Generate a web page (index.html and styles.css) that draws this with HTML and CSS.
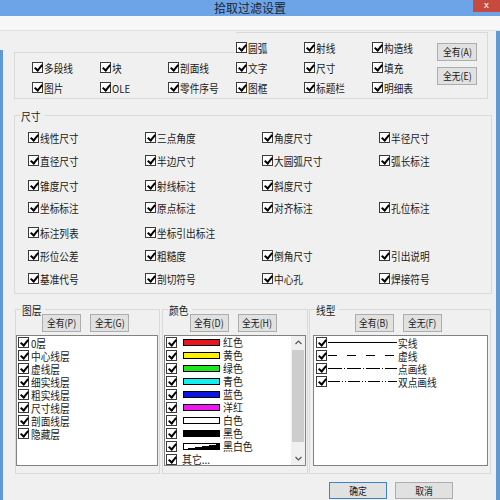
FILE: index.html
```html
<!DOCTYPE html>
<html lang="zh-CN">
<head>
<meta charset="utf-8">
<title>拾取过滤设置</title>
<link rel="stylesheet" href="styles.css">
</head>
<body>
<div class="titlebar">
  <div class="title-text">拾取过滤设置</div>
  <div class="close">x</div>
</div>
<div class="band"></div>
<div class="frame">
  <div class="edge-l"></div>
  <div class="content">
    <div class="topgroup">
      <div class="notch"></div>
      <div class="btns">
        <button class="btn"><span class="bt">全有(A)</span></button>
        <button class="btn"><span class="bt">全无(E)</span></button>
      </div>
      <div class="ci"><span class="cb"></span><span class="t">圆弧</span></div>
      <div class="ci"><span class="cb"></span><span class="t">射线</span></div>
      <div class="ci"><span class="cb"></span><span class="t">构造线</span></div>
      <div class="ci"><span class="cb"></span><span class="t">多段线</span></div>
      <div class="ci"><span class="cb"></span><span class="t">块</span></div>
      <div class="ci"><span class="cb"></span><span class="t">剖面线</span></div>
      <div class="ci"><span class="cb"></span><span class="t">文字</span></div>
      <div class="ci"><span class="cb"></span><span class="t">尺寸</span></div>
      <div class="ci"><span class="cb"></span><span class="t">填充</span></div>
      <div class="ci"><span class="cb"></span><span class="t">图片</span></div>
      <div class="ci"><span class="cb"></span><span class="t">OLE</span></div>
      <div class="ci"><span class="cb"></span><span class="t">零件序号</span></div>
      <div class="ci"><span class="cb"></span><span class="t">图框</span></div>
      <div class="ci"><span class="cb"></span><span class="t">标题栏</span></div>
      <div class="ci"><span class="cb"></span><span class="t">明细表</span></div>
    </div>

    <div class="dimgroup">
      <span class="glabel"><span class="t">尺寸</span></span>
      <div class="dimgrid">
        <div class="ci"><span class="cb"></span><span class="t">线性尺寸</span></div>
        <div class="ci"><span class="cb"></span><span class="t">三点角度</span></div>
        <div class="ci"><span class="cb"></span><span class="t">角度尺寸</span></div>
        <div class="ci"><span class="cb"></span><span class="t">半径尺寸</span></div>

        <div class="ci"><span class="cb"></span><span class="t">直径尺寸</span></div>
        <div class="ci"><span class="cb"></span><span class="t">半边尺寸</span></div>
        <div class="ci"><span class="cb"></span><span class="t">大圆弧尺寸</span></div>
        <div class="ci"><span class="cb"></span><span class="t">弧长标注</span></div>

        <div class="ci"><span class="cb"></span><span class="t">锥度尺寸</span></div>
        <div class="ci"><span class="cb"></span><span class="t">射线标注</span></div>
        <div class="ci"><span class="cb"></span><span class="t">斜度尺寸</span></div>
        <div class="empty"></div>

        <div class="ci"><span class="cb"></span><span class="t">坐标标注</span></div>
        <div class="ci"><span class="cb"></span><span class="t">原点标注</span></div>
        <div class="ci"><span class="cb"></span><span class="t">对齐标注</span></div>
        <div class="ci"><span class="cb"></span><span class="t">孔位标注</span></div>

        <div class="ci"><span class="cb"></span><span class="t">标注列表</span></div>
        <div class="ci"><span class="cb"></span><span class="t">坐标引出标注</span></div>
        <div class="empty"></div>
        <div class="empty"></div>

        <div class="ci"><span class="cb"></span><span class="t">形位公差</span></div>
        <div class="ci"><span class="cb"></span><span class="t">粗糙度</span></div>
        <div class="ci"><span class="cb"></span><span class="t">倒角尺寸</span></div>
        <div class="ci"><span class="cb"></span><span class="t">引出说明</span></div>

        <div class="ci"><span class="cb"></span><span class="t">基准代号</span></div>
        <div class="ci"><span class="cb"></span><span class="t">剖切符号</span></div>
        <div class="ci"><span class="cb"></span><span class="t">中心孔</span></div>
        <div class="ci"><span class="cb"></span><span class="t">焊接符号</span></div>
      </div>
    </div>

    <div class="bottomrow">
      <div class="bgroup layers">
        <span class="glabel"><span class="t">图层</span></span>
        <div class="brow">
          <button class="btn sm"><span class="bt">全有(P)</span></button>
          <button class="btn sm"><span class="bt">全无(G)</span></button>
        </div>
        <div class="lst">
          <div class="li"><span class="cb"></span><span class="t">0层</span></div>
          <div class="li"><span class="cb"></span><span class="t">中心线层</span></div>
          <div class="li"><span class="cb"></span><span class="t">虚线层</span></div>
          <div class="li"><span class="cb"></span><span class="t">细实线层</span></div>
          <div class="li"><span class="cb"></span><span class="t">粗实线层</span></div>
          <div class="li"><span class="cb"></span><span class="t">尺寸线层</span></div>
          <div class="li"><span class="cb"></span><span class="t">剖面线层</span></div>
          <div class="li"><span class="cb"></span><span class="t">隐藏层</span></div>
        </div>
      </div>

      <div class="bgroup colors">
        <span class="glabel"><span class="t">颜色</span></span>
        <div class="brow">
          <button class="btn sm"><span class="bt">全有(D)</span></button>
          <button class="btn sm"><span class="bt">全无(H)</span></button>
        </div>
        <div class="lst clist">
          <div class="citems">
            <div class="li"><span class="cb"></span><span class="sw red"></span><span class="ct">红色</span></div>
            <div class="li"><span class="cb"></span><span class="sw yellow"></span><span class="ct">黄色</span></div>
            <div class="li"><span class="cb"></span><span class="sw green"></span><span class="ct">绿色</span></div>
            <div class="li"><span class="cb"></span><span class="sw cyan"></span><span class="ct">青色</span></div>
            <div class="li"><span class="cb"></span><span class="sw blue"></span><span class="ct">蓝色</span></div>
            <div class="li"><span class="cb"></span><span class="sw magenta"></span><span class="ct">洋红</span></div>
            <div class="li"><span class="cb"></span><span class="sw white"></span><span class="ct">白色</span></div>
            <div class="li"><span class="cb"></span><span class="sw black"></span><span class="ct">黑色</span></div>
            <div class="li"><span class="cb"></span><span class="sw bw"></span><span class="ct">黑白色</span></div>
            <div class="li"><span class="cb"></span><span class="ct other">其它...</span></div>
          </div>
          <div class="sb">
            <div class="arrow">
              <svg width="7" height="5" viewBox="0 0 7 5"><path d="M0.5 4 L3.5 1 L6.5 4" fill="none" stroke="#555" stroke-width="1.2"/></svg>
            </div>
            <div class="track"><div class="thumb"></div></div>
            <div class="arrow">
              <svg width="7" height="5" viewBox="0 0 7 5"><path d="M0.5 1 L3.5 4 L6.5 1" fill="none" stroke="#555" stroke-width="1.2"/></svg>
            </div>
          </div>
        </div>
      </div>

      <div class="bgroup linetypes">
        <span class="glabel"><span class="t">线型</span></span>
        <div class="brow">
          <button class="btn sm"><span class="bt">全有(B)</span></button>
          <button class="btn sm"><span class="bt">全无(F)</span></button>
        </div>
        <div class="lst">
          <div class="li"><span class="cb"></span>
            <svg class="ln" width="69" height="11" viewBox="0 0 69 11"><line x1="0" y1="5.5" x2="69" y2="5.5" stroke="#000" stroke-width="1"/></svg>
            <span class="t">实线</span></div>
          <div class="li"><span class="cb"></span>
            <svg class="ln" width="69" height="11" viewBox="0 0 69 11"><line x1="0" y1="5.5" x2="69" y2="5.5" stroke="#000" stroke-width="1" stroke-dasharray="9 10"/></svg>
            <span class="t">虚线</span></div>
          <div class="li"><span class="cb"></span>
            <svg class="ln" width="69" height="11" viewBox="0 0 69 11"><line x1="0" y1="5.5" x2="69" y2="5.5" stroke="#000" stroke-width="1" stroke-dasharray="14 2 1 2"/></svg>
            <span class="t">点画线</span></div>
          <div class="li"><span class="cb"></span>
            <svg class="ln" width="69" height="11" viewBox="0 0 69 11"><line x1="0" y1="5.5" x2="69" y2="5.5" stroke="#000" stroke-width="1" stroke-dasharray="12 2 1 2 1 2"/></svg>
            <span class="t">双点画线</span></div>
        </div>
      </div>
    </div>

    <div class="actions">
      <button class="btn act default"><span class="bt">确定</span></button>
      <button class="btn act"><span class="bt">取消</span></button>
    </div>
  </div>
  <div class="edge-r"></div>
</div>
</body>
</html>
```

FILE: styles.css
```css
* { box-sizing: border-box; }
html, body { margin: 0; padding: 0; }
body {
  width: 500px;
  height: 500px;
  overflow: hidden;
  background: #f0f0f0;
  font-family: "Noto Sans CJK SC", "Liberation Sans", sans-serif;
  font-size: 11px;
  color: #1a1a1a;
}

/* title bar */
.titlebar {
  display: grid;
  grid-template-columns: 1fr auto 1fr;
  height: 16px;
  background: #6ca4e7;
}
.title-text {
  grid-column: 2;
  font-size: 12px;
  line-height: 16px;
  color: #1d2633;
}
.close {
  grid-column: 3;
  justify-self: end;
  width: 27px;
  height: 12px;
  background: #c84a3e;
  color: #fff;
  font-family: "DejaVu Sans", sans-serif;
  font-size: 9px;
  line-height: 11px;
  text-align: center;
}
.band {
  height: 15px;
  background: #f7f7f7;
  border-bottom: 1px solid #e1e1e1;
}

/* frame */
.frame { display: flex; height: 469px; }
.edge-l { width: 3px; margin-top: 19px; background: #5f9ad6; }
.edge-r { width: 4px; background: #5f9ad6; }
.content { flex: 1; display: flex; flex-direction: column; }

/* text helpers */
.t {
  display: inline-block;
  line-height: 12px;
  transform: scaleX(.88);
  transform-origin: 0 50%;
  white-space: nowrap;
}

/* checkbox */
.cb {
  flex: none;
  width: 11px;
  height: 11px;
  border: 1px solid #3a3a3a;
  background: #fff;
}
.cb::after {
  content: "";
  display: block;
  width: 3px;
  height: 6px;
  margin: 0 0 0 3px;
  border: solid #000;
  border-width: 0 2px 2px 0;
  transform: rotate(40deg);
}
.ci {
  display: flex;
  align-items: center;
  height: 11px;
  gap: 1px;
  white-space: nowrap;
}

/* buttons */
.btn {
  display: flex;
  align-items: center;
  justify-content: center;
  width: 40px;
  height: 18px;
  padding: 0;
  margin: 0;
  border: 1px solid #adadad;
  background: #e1e1e1;
  font-family: inherit;
  font-size: 10px;
  color: #1a1a1a;
}
.bt {
  display: inline-block;
  transform: scaleX(.88);
  white-space: nowrap;
  line-height: 12px;
}
.btn.sm { width: 39px; }

/* top group */
.topgroup {
  margin: 1px 0 0 11px;
  width: 474px;
  height: 67px;
  border: 1px solid #d9d9d9;
  display: grid;
  grid-template-columns: repeat(5, 68px) 65px 40px;
  grid-template-rows: repeat(3, 20px);
  padding: 9px 0 0 17px;
}
.notch {
  grid-column: 1 / span 3;
  grid-row: 1;
  align-self: start;
  justify-self: start;
  width: 222px;
  height: 21px;
  margin: -10px 0 0 -18px;
  background: #f0f0f0;
  border-bottom: 1px solid #d9d9d9;
}
.btns {
  grid-column: 7;
  grid-row: 1 / span 3;
  display: flex;
  flex-direction: column;
  gap: 6px;
  padding-top: 1px;
}

/* dimension group */
.dimgroup {
  margin: 16px 0 0 11px;
  width: 478px;
  height: 179px;
  border: 1px solid #d9d9d9;
}
.glabel {
  display: block;
  width: max-content;
  margin: -6px 0 0 5px;
  padding: 0 1px;
  background: #f0f0f0;
  line-height: 12px;
  height: 12px;
}
.dimgrid {
  display: grid;
  grid-template-columns: repeat(4, 117px);
  grid-template-rows: 23px 25px 22px 25px 23px 23px 20px;
  padding: 10px 0 0 13px;
}

/* bottom groups */
.bottomrow {
  display: flex;
  margin: 15px 0 0 12px;
  height: 165px;
}
.bgroup {
  height: 165px;
  border: 1px solid #d9d9d9;
  display: flex;
  flex-direction: column;
}
.layers { width: 145px; }
.colors { width: 146px; margin-left: 2px; }
.linetypes { width: 182px; margin-left: 1px; }
.bgroup .glabel { margin-bottom: -2px; }
.brow {
  display: flex;
  justify-content: center;
  gap: 9px;
  height: 18px;
  padding-right: 4px;
}
.lst {
  margin: 3px 1px 0 1px;
  height: 131px;
  border: 1px solid #828282;
  background: #fff;
  padding: 0 0 0 1px;
}
.layers .lst { margin-left: 0; }
.linetypes .lst { margin-left: 3px; margin-right: 2px; padding-left: 2px; }
.li {
  display: flex;
  align-items: center;
  height: 13px;
  gap: 2px;
  white-space: nowrap;
}

/* color list */
.clist { display: flex; padding-right: 0; }
.citems { flex: 1; }
.sw {
  flex: none;
  width: 37px;
  height: 7px;
  margin-left: 4px;
  border: 1px solid #000;
}
.red { background: #e8161c; }
.yellow { background: #fff200; }
.green { background: #1ee61e; }
.cyan { background: #14f0f0; }
.blue { background: #0a14e6; }
.magenta { background: #f014f0; }
.white { background: #fff; }
.black { background: #000; }
.bw { background: linear-gradient(to bottom right, #fff 50%, #000 50%); }
.ct {
  display: inline-block;
  margin-left: 1px;
  font-size: 11.5px;
  line-height: 13px;
  transform: scaleX(.86);
  transform-origin: 0 50%;
}
.ct.other { margin-left: 3px; }
.sb {
  width: 14px;
  display: flex;
  flex-direction: column;
  background: #f0f0f0;
}
.arrow {
  height: 13px;
  display: flex;
  align-items: center;
  justify-content: center;
}
.track { flex: 1; padding: 1px 1px 10px 1px; }
.thumb { height: 100%; background: #cdcdcd; }

/* line types */
.ln { flex: none; margin-left: 0; }
.linetypes .li { gap: 1px; }

/* action buttons */
.actions {
  display: flex;
  justify-content: flex-end;
  gap: 8px;
  margin-top: 8px;
  padding-right: 43px;
}
.btn.act { width: 58px; height: 17px; }
.btn.default { border-color: #3c84c8; }
```
